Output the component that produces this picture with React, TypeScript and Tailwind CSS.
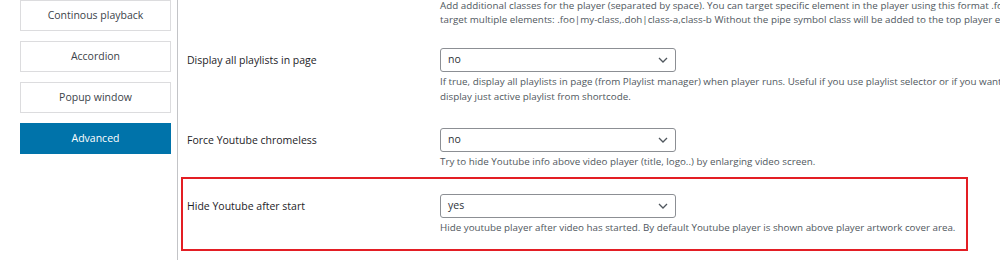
const font = { fontFamily: '"Open Sans", "Noto Sans", sans-serif' };

function SideButton({ label, active }: { label: string; active?: boolean }) {
  return (
    <div
      className={
        active
          ? "h-[31px] flex items-center justify-center bg-[#0073aa] text-white text-[10.5px]"
          : "h-[31px] flex items-center justify-center bg-white border border-[#dcdcde] text-[#3c434a] text-[10.5px]"
      }
    >
      {label}
    </div>
  );
}

function Chevron() {
  return (
    <svg width="10" height="6" viewBox="0 0 10 6" className="text-[#50575e]">
      <path d="M1 1l4 4 4-4" fill="none" stroke="currentColor" strokeWidth="1.3" />
    </svg>
  );
}

function Select({ value }: { value: string }) {
  return (
    <div className="w-[236px] h-[24px] border border-[#8c8f94] rounded-[3px] bg-white flex items-center justify-between pl-[7px] pr-[7px] text-[10.5px] text-[#2c3338]">
      <span>{value}</span>
      <Chevron />
    </div>
  );
}

function Row({
  label,
  value,
  desc,
}: {
  label: string;
  value: string;
  desc: React.ReactNode;
}) {
  return (
    <div className="flex">
      <div className="w-[253px] text-[10.5px] text-[#1d2327] pt-[5px] shrink-0">{label}</div>
      <div>
        <Select value={value} />
        <div className="mt-[2px] text-[9.8px] leading-[15px] text-[#50575e] whitespace-nowrap">{desc}</div>
      </div>
    </div>
  );
}

export default function App() {
  return (
    <div className="w-[1000px] h-[260px] bg-white overflow-hidden flex" style={font}>
      <div className="w-[178px] shrink-0 border-r border-[#c3c4c7] pl-[20px] pr-[6px] flex flex-col gap-[10px]">
        <SideButton label="Continous playback" />
        <SideButton label="Accordion" />
        <SideButton label="Popup window" />
        <SideButton label="Advanced" active />
      </div>
      <div className="flex-1 min-w-0 pl-[3px]">
        <div className="pl-[259px] text-[9.8px] leading-[14px] text-[#50575e] whitespace-nowrap -mt-[1px]">
          <div>
            Add additional classes for the player (separated by space). You can target specific element in the player using this format .foo|my-class
          </div>
          <div>
            target multiple elements: .foo|my-class,.doh|class-a,class-b Without the pipe symbol class will be added to the top player element.
          </div>
        </div>
        <div className="pl-[6px] mt-[21px]">
          <Row
            label="Display all playlists in page"
            value="no"
            desc={
              <>
                <div>
                  If true, display all playlists in page (from Playlist manager) when player runs. Useful if you use playlist selector or if you want to
                </div>
                <div>display just active playlist from shortcode.</div>
              </>
            }
          />
        </div>
        <div className="pl-[6px] mt-[24px]">
          <Row
            label="Force Youtube chromeless"
            value="no"
            desc="Try to hide Youtube info above video player (title, logo..) by enlarging video screen."
          />
        </div>
        <div className="mt-[8px] w-[787px] h-[74px] border-2 border-[#e31e24] pl-[4px] pt-[15px]">
          <Row
            label="Hide Youtube after start"
            value="yes"
            desc="Hide youtube player after video has started. By default Youtube player is shown above player artwork cover area."
          />
        </div>
      </div>
    </div>
  );
}
